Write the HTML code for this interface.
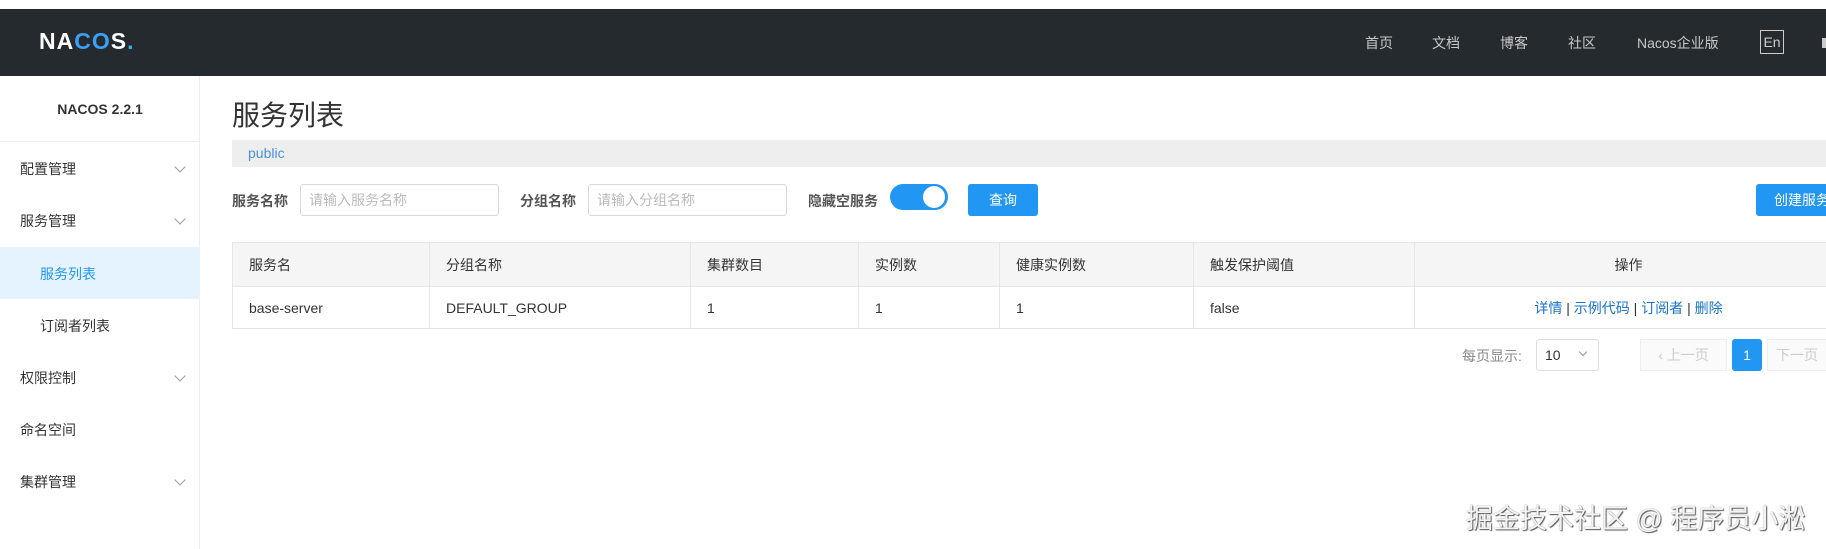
<!DOCTYPE html>
<html><head><meta charset="utf-8"><style>
*{margin:0;padding:0;box-sizing:border-box}
body{width:1826px;height:549px;overflow:hidden;background:#fff;font-family:"Liberation Sans","Noto Sans CJK SC",sans-serif;font-size:14px;color:#333;position:relative}
.a{position:absolute;white-space:nowrap}
.hdr{position:absolute;left:0;top:9px;width:1826px;height:67px;background:#252a2f}
.nav{color:#c8c8c8;font-size:14px;top:33px}
.side{position:absolute;left:0;top:76px;width:200px;height:473px;border-right:1px solid #eee}
.mi{position:absolute;left:20px;font-size:14px;color:#333}
.chev{position:absolute;left:176px;width:8px;height:8px;border-right:1px solid #999;border-bottom:1px solid #999;transform:rotate(45deg)}
.inp{position:absolute;height:32px;border:1px solid #d9d9d9;border-radius:3px;color:#bbb;font-size:14px;padding-left:8px;line-height:30px}
.lbl{font-weight:bold;color:#555;font-size:14px}
table{position:absolute;left:232px;top:242px;width:1610px;border-collapse:collapse;font-size:14px;table-layout:fixed}
td,th{border:1px solid #e6e6e6;text-align:left;font-weight:normal;padding-left:16px;color:#333}
th{background:#f5f5f5;height:44px}
td{height:42px}
.btn{position:absolute;background:#2196f3;color:#fff;border-radius:3px;text-align:center;line-height:32px;height:32px}
</style></head><body>
<div class="hdr"></div>
<div class="a" style="left:39px;top:28px;font-size:23px;font-weight:bold;color:#fff;letter-spacing:1px">NA<span style="color:#3aa0f5">CO</span>S<span style="color:#32b3e8">.</span></div>
<div class="a nav" style="left:1365px">首页</div>
<div class="a nav" style="left:1432px">文档</div>
<div class="a nav" style="left:1500px">博客</div>
<div class="a nav" style="left:1568px">社区</div>
<div class="a nav" style="left:1637px">Nacos企业版</div>
<div class="a" style="left:1760px;top:30px;width:24px;height:24px;border:1px solid #ccc;color:#ccc;font-size:14px;text-align:center;line-height:22px">En</div>
<div class="a" style="left:1822px;top:38px;width:4px;height:10px;background:#ccc"></div>

<div class="side"></div>
<div class="a" style="left:0;top:141px;width:200px;height:1px;background:#eee"></div>
<div class="a" style="left:0;top:101px;width:200px;text-align:center;font-weight:bold;font-size:14px;color:#333">NACOS 2.2.1</div>
<div class="mi" style="top:159px">配置管理</div><div class="chev" style="top:163px"></div>
<div class="mi" style="top:211px">服务管理</div><div class="chev" style="top:215px"></div>
<div class="a" style="left:0;top:247px;width:200px;height:52px;background:#e5f3ff"></div>
<div class="mi" style="top:264px;left:40px;color:#2196f3">服务列表</div>
<div class="mi" style="top:316px;left:40px">订阅者列表</div>
<div class="mi" style="top:368px">权限控制</div><div class="chev" style="top:372px"></div>
<div class="mi" style="top:420px">命名空间</div>
<div class="mi" style="top:472px">集群管理</div><div class="chev" style="top:476px"></div>

<div class="a" style="left:232px;top:94px;font-size:28px;color:#333">服务列表</div>
<div class="a" style="left:232px;top:140px;width:1594px;height:27px;background:#eee"></div>
<div class="a" style="left:248px;top:145px;color:#4a90e2;font-size:14px">public</div>

<div class="a lbl" style="left:232px;top:191px">服务名称</div>
<div class="inp" style="left:300px;top:184px;width:199px">请输入服务名称</div>
<div class="a lbl" style="left:520px;top:191px">分组名称</div>
<div class="inp" style="left:588px;top:184px;width:199px">请输入分组名称</div>
<div class="a lbl" style="left:808px;top:191px">隐藏空服务</div>
<div class="a" style="left:890px;top:184px;width:58px;height:26px;border-radius:13px;background:#2196f3"></div>
<div class="a" style="left:923px;top:186px;width:22px;height:22px;border-radius:11px;background:#fff"></div>
<div class="btn" style="left:968px;top:184px;width:70px">查询</div>
<div class="btn" style="left:1756px;top:184px;width:90px;text-align:left;padding-left:18px">创建服务</div>

<table>
<colgroup><col style="width:197px"><col style="width:261px"><col style="width:168px"><col style="width:141px"><col style="width:194px"><col style="width:221px"><col style="width:428px"></colgroup>
<tr><th>服务名</th><th>分组名称</th><th>集群数目</th><th>实例数</th><th>健康实例数</th><th>触发保护阈值</th><th style="text-align:center;padding:0">操作</th></tr>
<tr><td>base-server</td><td>DEFAULT_GROUP</td><td>1</td><td>1</td><td>1</td><td>false</td><td style="text-align:center;padding:0;color:#1a73c8">详情 <span style="color:#333">|</span> 示例代码 <span style="color:#333">|</span> 订阅者 <span style="color:#333">|</span> 删除</td></tr>
</table>

<div class="a" style="left:1462px;top:346px;color:#888">每页显示:</div>
<div class="a" style="left:1536px;top:339px;width:63px;height:32px;border:1px solid #ddd;border-radius:3px;padding-left:8px;line-height:30px">10</div>
<div class="a" style="left:1580px;top:349px;width:6px;height:6px;border-right:1px solid #999;border-bottom:1px solid #999;transform:rotate(45deg)"></div>
<div class="a" style="left:1640px;top:339px;width:87px;height:32px;border:1px solid #eee;background:#fafafa;color:#ccc;line-height:30px;text-align:center">‹ 上一页</div>
<div class="btn" style="left:1732px;top:339px;width:30px">1</div>
<div class="a" style="left:1767px;top:339px;width:70px;height:32px;border:1px solid #eee;background:#fafafa;color:#ccc;line-height:30px;padding-left:8px">下一页</div>

<div class="a" style="left:1466px;top:497px;font-size:27px;color:#f4f4f4;text-shadow:1px 1px 1px #555,0 0 1px #777">掘金技术社区 @ 程序员小淞</div>
</body></html>
